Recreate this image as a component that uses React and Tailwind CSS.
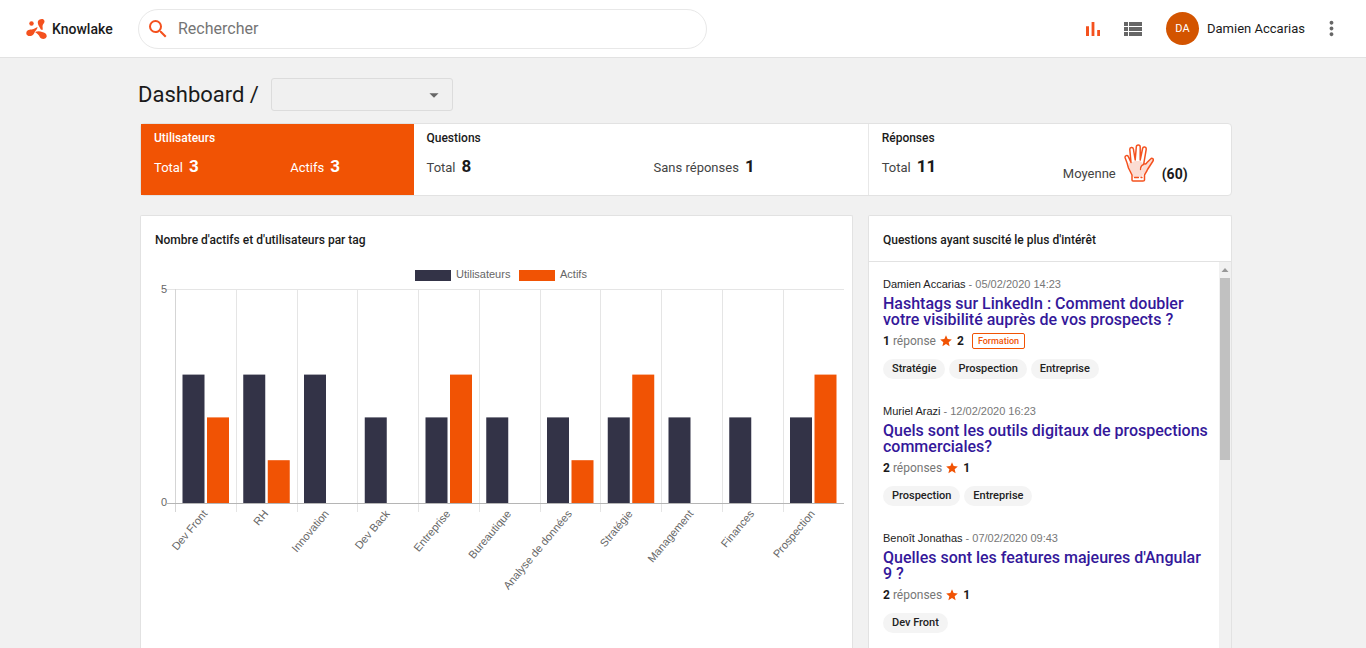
import { MdArrowDropDown, MdMoreVert, MdSearch, MdStar, MdViewList } from "react-icons/md";

const tagStats = [
  { tag: "Dev Front", users: 3, actives: 2 },
  { tag: "RH", users: 3, actives: 1 },
  { tag: "Innovation", users: 3, actives: 0 },
  { tag: "Dev Back", users: 2, actives: 0 },
  { tag: "Entreprise", users: 2, actives: 3 },
  { tag: "Bureautique", users: 2, actives: 0 },
  { tag: "Analyse de données", users: 2, actives: 1 },
  { tag: "Stratégie", users: 2, actives: 3 },
  { tag: "Management", users: 2, actives: 0 },
  { tag: "Finances", users: 2, actives: 0 },
  { tag: "Prospection", users: 2, actives: 3 },
];

const questions = [
  {
    author: "Damien Accarias",
    date: "05/02/2020 14:23",
    title: "Hashtags sur LinkedIn : Comment doubler votre visibilité auprès de vos prospects ?",
    answers: 1,
    stars: 2,
    badge: "Formation",
    tags: ["Stratégie", "Prospection", "Entreprise"],
  },
  {
    author: "Muriel Arazi",
    date: "12/02/2020 16:23",
    title: "Quels sont les outils digitaux de prospections commerciales?",
    answers: 2,
    stars: 1,
    tags: ["Prospection", "Entreprise"],
  },
  {
    author: "Benoît Jonathas",
    date: "07/02/2020 09:43",
    title: "Quelles sont les features majeures d'Angular 9 ?",
    answers: 2,
    stars: 1,
    tags: ["Dev Front"],
  },
];

function Logo() {
  return (
    <svg viewBox="0 0 42 42" className="size-[21px]" fill="#f4511e" aria-hidden="true">
      <circle cx="11" cy="11" r="4.5" />
      <path d="M24 6c3-5 12-6 13 0 1 4-4 6-4 10 0 3 1 5 0 8-3 0-4-2-5-4-2-4-6-9-4-14z" />
      <path d="M1 28c2-6 9-4 14-6 3-1 5-3 8-4 0 4-3 6-5 9-2 4-3 8-8 9-6 1-11-2-9-8z" />
      <path d="M18 28c5-2 10-2 14 0 6 1 11 5 9 10-2 5-10 5-13 1-2-5-5-8-10-11z" />
    </svg>
  );
}

function ChartIcon() {
  return (
    <svg viewBox="0 0 24 24" className="size-6" fill="currentColor" aria-hidden="true">
      <path d="M5 9.200h3V19H5zM10.600 5h2.800v14h-2.800zM16.200 13H19v6h-2.800z" />
    </svg>
  );
}

function HandIcon() {
  return (
    <svg viewBox="0 0 30 38" className="h-[38px] w-[30px]" fill="none" stroke="#f4511e" strokeLinecap="round" strokeLinejoin="round" aria-hidden="true">
      <path d="M4.500 19 7 18.500l4-1.500 5 0 4 3-3 5 2 5-1 3H9l-1-3-3-6z" fill="#fbdcd3" stroke="none" />
      <path d="M20 21l3-1.500 5-5 1 2-6 9-3 5.500-3-5z" fill="#fbdcd3" stroke="none" />
      <path
        d="M8 31 4.500 24C3.500 20 2.500 17 1.200 14 .5 11.500 3.800 10.500 4.500 13L7 18.500 5.800 5.500C5.600 3 9 2.600 9.400 5l1.800 11L12.300 3c.1-2.700 3.900-2.700 3.900 0v13l2.400-11.500c.5-2.300 3.900-1.700 3.600.8L19.800 19.500c1.200 1 2.200.5 3-.7L26.600 15c1.400-1.500 3.400 0 2.400 2L23.500 25.500c-1 2.500-2 3.500-3 5.500v5c0 1-.5 1-1.500 1H9c-1 0-1-.5-1-1z"
        strokeWidth="1.500"
      />
      <path d="M16.500 25.500c0-2.500 1.300-4.500 3.300-5M10.500 33.500h4M17 33.500h1" strokeWidth="1.300" />
    </svg>
  );
}

function StatCard({ title, className, first, second }) {
  return (
    <div className={className}>
      <h2 className="pl-[13px] text-xs leading-4 font-medium">{title}</h2>
      <div className="mt-2 grid grid-cols-2">
        <div className="pl-[13px]">{first}</div>
        <div className="pl-[13px]">{second}</div>
      </div>
    </div>
  );
}

function Stat({ label, value, light }) {
  return (
    <p className="flex items-baseline gap-1.5 text-[13px] leading-6">
      <span className={light ? "text-white" : "text-[#444]"}>{label}</span>
      <strong className="text-[17px] font-bold">{value}</strong>
    </p>
  );
}

function TagChart() {
  const left = 35;
  const top = 27;
  const bottom = 241;
  const step = 60.75;
  const unit = (bottom - top) / 5;

  return (
    <svg viewBox="0 0 711 340" className="w-full font-['Liberation_Sans',Arial,sans-serif] text-[11px]" role="img" aria-label="Nombre d'actifs et d'utilisateurs par tag">
      <rect x="274" y="8" width="36" height="11" fill="#333347" />
      <text x="315" y="16" fill="#666">Utilisateurs</text>
      <rect x="378" y="8" width="36" height="11" fill="#f15304" />
      <text x="419" y="16" fill="#666">Actifs</text>

      <path d={`M25 ${top + 0.5}H703`} stroke="#e5e5e5" />
      {tagStats.map((item, i) => (
        <path key={item.tag} d={`M${Math.round(left + i * step) - 0.5} ${top}V${bottom + 9}`} stroke={i === 0 ? "#d5d5d5" : "#e5e5e5"} />
      ))}
      <text x="26" y="31" textAnchor="end" fill="#666">5</text>
      <text x="26" y="244" textAnchor="end" fill="#666">0</text>

      {tagStats.map((item, i) => {
        const x = left + i * step;
        return (
          <g key={item.tag}>
            <rect x={x + 6.5} y={bottom - item.users * unit} width="22" height={item.users * unit} fill="#333347" />
            <rect x={x + 31} y={bottom - item.actives * unit} width="22" height={item.actives * unit} fill="#f15304" />
            <text transform={`translate(${x + 32} 252) rotate(-50)`} textAnchor="end" fill="#666">
              {item.tag}
            </text>
          </g>
        );
      })}
      <path d={`M25 ${bottom + 0.5}H703`} stroke="#b5b5b5" />
    </svg>
  );
}

function Question({ question }) {
  return (
    <li>
      <p className="font-['Liberation_Sans',Arial,sans-serif] text-[11px] leading-4 text-[#777]">
        <span className="text-[#222]">{question.author}</span> - {question.date}
      </p>
      <a href="#" className="mt-1 block text-base leading-4 font-medium text-[#34189a]">
        {question.title}
      </a>
      <div className="mt-[5px] flex h-4 items-center text-xs">
        <strong className="font-bold">{question.answers}</strong>
        <span className="ml-[3px] text-[#777]">{question.answers > 1 ? "réponses" : "réponse"}</span>
        <MdStar size={14} className="ml-[3px] text-[#f15304]" />
        <strong className="ml-1 font-bold">{question.stars}</strong>
        {question.badge && (
          <span className="ml-2 rounded-xs border border-[#f15304] px-[5px] text-[9px] leading-[14px] font-medium text-[#f15304]">
            {question.badge}
          </span>
        )}
      </div>
      <ul className="mt-2.5 flex gap-1">
        {question.tags.map((tag) => (
          <li key={tag} className="rounded-full bg-[#f4f4f4] px-[9px] text-[11px] leading-5 font-medium text-[#222]">
            {tag}
          </li>
        ))}
      </ul>
    </li>
  );
}

export default function App() {
  return (
    <div className="flex h-screen flex-col overflow-hidden bg-[#f1f1f1] font-[Roboto,sans-serif] text-[#1a1a1a]">
      {/* Header */}
      <header className="flex h-[58px] shrink-0 items-center border-b border-[#e2e2e2] bg-white">
        <a href="#" className="flex w-[138px] items-center gap-[5px] pl-[26px] text-sm leading-4 font-medium">
          <Logo />
          Knowlake
        </a>
        <label className="flex h-10 w-5/12 items-center gap-2 rounded-full border border-[#e8e8e8] pl-[7px]">
          <MdSearch size={24} className="text-[#f4511e]" />
          <input type="text" placeholder="Rechercher" aria-label="Rechercher" className="min-w-0 flex-1 text-base outline-none placeholder:text-[#757575]" />
        </label>
        <div className="ml-auto flex items-center pr-[23px]">
          <button type="button" aria-label="Statistiques" className="mr-4 text-[#f4511e]">
            <ChartIcon />
          </button>
          <button type="button" aria-label="Liste" className="mr-[21px] text-[#666]">
            <MdViewList size={24} />
          </button>
          <span className="flex size-[33px] items-center justify-center rounded-full bg-[#d35400] text-[11px] leading-4 text-white">DA</span>
          <span className="ml-2 text-[13px]">Damien Accarias</span>
          <button type="button" aria-label="Menu" className="ml-[15px] text-[#666]">
            <MdMoreVert size={23} />
          </button>
        </div>
      </header>

      <main className="flex min-h-0 flex-1 flex-col pt-5 pr-[134px] pl-[138px]">
        {/* Title */}
        <div className="flex h-[33px] items-center gap-3">
          <h1 className="text-[22px] leading-8">Dashboard /</h1>
          <div className="relative">
            <select aria-label="Dashboard" className="block h-[33px] w-[182px] appearance-none rounded-[3px] border border-[#dcdcdc] bg-[#f0f0f0]">
              <option></option>
            </select>
            <MdArrowDropDown size={22} className="pointer-events-none absolute top-1.5 right-2 text-[#666]" />
          </div>
        </div>

        {/* Stats */}
        <section className="mt-3 ml-0.5 grid h-[73px] shrink-0 grid-cols-12 rounded-sm border border-[#e2e2e2] bg-white">
          <StatCard
            title="Utilisateurs"
            className="col-span-3 bg-[#f15304] pt-1.5 text-white"
            first={<Stat label="Total" value="3" light />}
            second={<Stat label="Actifs" value="3" light />}
          />
          <StatCard
            title="Questions"
            className="col-span-5 pt-1.5"
            first={<Stat label="Total" value="8" />}
            second={<Stat label="Sans réponses" value="1" />}
          />
          <StatCard
            title="Réponses"
            className="col-span-4 border-l border-[#e8e8e8] pt-1.5"
            first={<Stat label="Total" value="11" />}
            second={
              <div className="-mt-2.5 flex items-end text-[13px] leading-4">
                <span className="text-[#444]">Moyenne</span>
                <span className="mx-2">
                  <HandIcon />
                </span>
                <strong className="text-sm leading-4 font-bold">(60)</strong>
              </div>
            }
          />
        </section>

        {/* Panels */}
        <div className="mt-[19px] ml-0.5 grid min-h-0 flex-1 grid-cols-12">
          <section className="col-span-8 mr-[15px] overflow-hidden rounded-t-xs border border-b-0 border-[#e2e2e2] bg-white">
            <h2 className="pt-4 pb-[14px] pl-3.5 text-xs leading-4 font-medium">Nombre d'actifs et d'utilisateurs par tag</h2>
            <TagChart />
          </section>

          <section className="col-span-4 flex min-h-0 flex-col rounded-t-xs border border-b-0 border-[#e2e2e2] bg-white">
            <h2 className="border-b border-[#e2e2e2] pt-4 pb-[13px] pl-3.5 text-xs leading-4 font-medium">
              Questions ayant suscité le plus d'intérêt
            </h2>
            <div className="flex min-h-0 flex-1">
              <ul className="flex min-w-0 flex-1 flex-col gap-6 overflow-hidden pt-3.5 pr-2 pl-3.5">
                {questions.map((question) => (
                  <Question key={question.title} question={question} />
                ))}
              </ul>
              <div className="flex w-3 shrink-0 flex-col items-center bg-[#f1f1f1]" aria-hidden="true">
                <svg viewBox="0 0 12 16" className="h-4 w-3">
                  <path d="M2.500 10h7L6 6z" fill="#999" />
                </svg>
                <div className="h-[182px] w-2.5 bg-[#c1c1c1]" />
              </div>
            </div>
          </section>
        </div>
      </main>
    </div>
  );
}
